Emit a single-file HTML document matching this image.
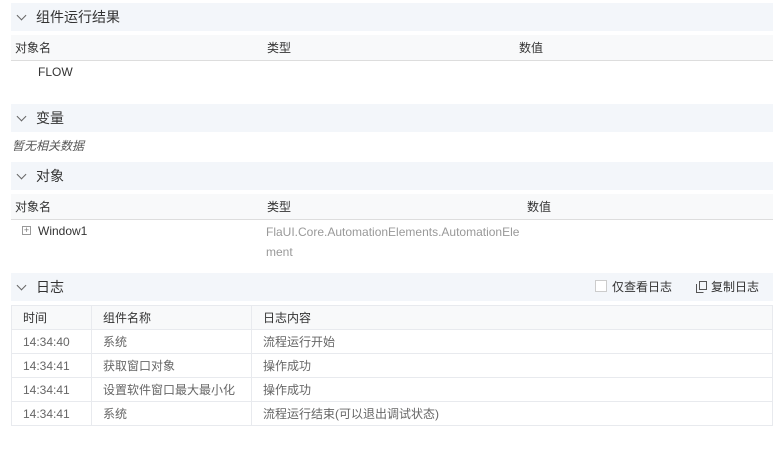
<!DOCTYPE html>
<html><head><meta charset="utf-8"><style>
*{margin:0;padding:0;box-sizing:border-box}
body{width:783px;height:452px;background:#fff;font-family:"Liberation Sans","Noto Sans CJK SC",sans-serif;font-size:12px;color:#333;position:relative;overflow:hidden}
.a{position:absolute}
.bar{position:absolute;left:11px;width:762px;height:28px;background:#f3f6fa;font-size:14px;color:#333;line-height:28px;padding-left:25px}
.chev{position:absolute;left:7px;top:9px;width:7px;height:7px;border-right:1px solid #666;border-bottom:1px solid #666;transform:rotate(45deg)}
.th{position:absolute;left:11px;width:762px;height:26px;background:#f8f9fa;border-bottom:1px solid #ddd;line-height:26px}
.th span{position:absolute}
table{position:absolute;left:11px;top:305px;width:762px;border-collapse:collapse}
td{border:1px solid #e8eaee;height:24px;padding-left:11px;color:#666;font-size:12px}
tr:first-child td{background:#f8f9fa;color:#333}
</style></head><body>
<div class="bar" style="top:3px"><i class="chev"></i>组件运行结果</div>
<div class="th" style="top:35px"><span style="left:4px">对象名</span><span style="left:256px">类型</span><span style="left:508px">数值</span></div>
<div class="a" style="left:38px;top:64px;line-height:16px">FLOW</div>
<div class="bar" style="top:104px"><i class="chev"></i>变量</div>
<div class="a" style="left:12px;top:137px;font-style:italic;color:#555">暂无相关数据</div>
<div class="bar" style="top:162px"><i class="chev"></i>对象</div>
<div class="th" style="top:194px"><span style="left:4px">对象名</span><span style="left:256px">类型</span><span style="left:516px">数值</span></div>
<div class="a" style="left:22px;top:226px;width:9px;height:9px;border:1px solid #999;font-size:9px;line-height:7px;text-align:center;color:#777">+</div>
<div class="a" style="left:38px;top:223px;line-height:16px">Window1</div>
<div class="a" style="left:266px;top:222px;line-height:20px;color:#999;width:260px">FlaUI.Core.AutomationElements.AutomationEle<br>ment</div>
<div class="bar" style="top:273px"><i class="chev"></i>日志
<span class="a" style="left:584px;top:7px;width:12px;height:12px;border:1px solid #ccc;background:#fff"></span>
<span class="a" style="left:601px;font-size:12px">仅查看日志</span>
<svg class="a" style="left:685px;top:8px" width="11" height="12" viewBox="0 0 11 12"><rect x="3.5" y="0.5" width="7" height="8" fill="none" stroke="#555"/><path d="M0.5 3v8.5h7" fill="none" stroke="#555"/></svg>
<span class="a" style="left:700px;font-size:12px">复制日志</span></div>
<table>
<colgroup><col style="width:80px"><col style="width:160px"><col></colgroup>
<tr><td>时间</td><td>组件名称</td><td>日志内容</td></tr>
<tr><td>14:34:40</td><td>系统</td><td>流程运行开始</td></tr>
<tr><td>14:34:41</td><td>获取窗口对象</td><td>操作成功</td></tr>
<tr><td>14:34:41</td><td>设置软件窗口最大最小化</td><td>操作成功</td></tr>
<tr><td>14:34:41</td><td>系统</td><td>流程运行结束(可以退出调试状态)</td></tr>
</table>
</body></html>
